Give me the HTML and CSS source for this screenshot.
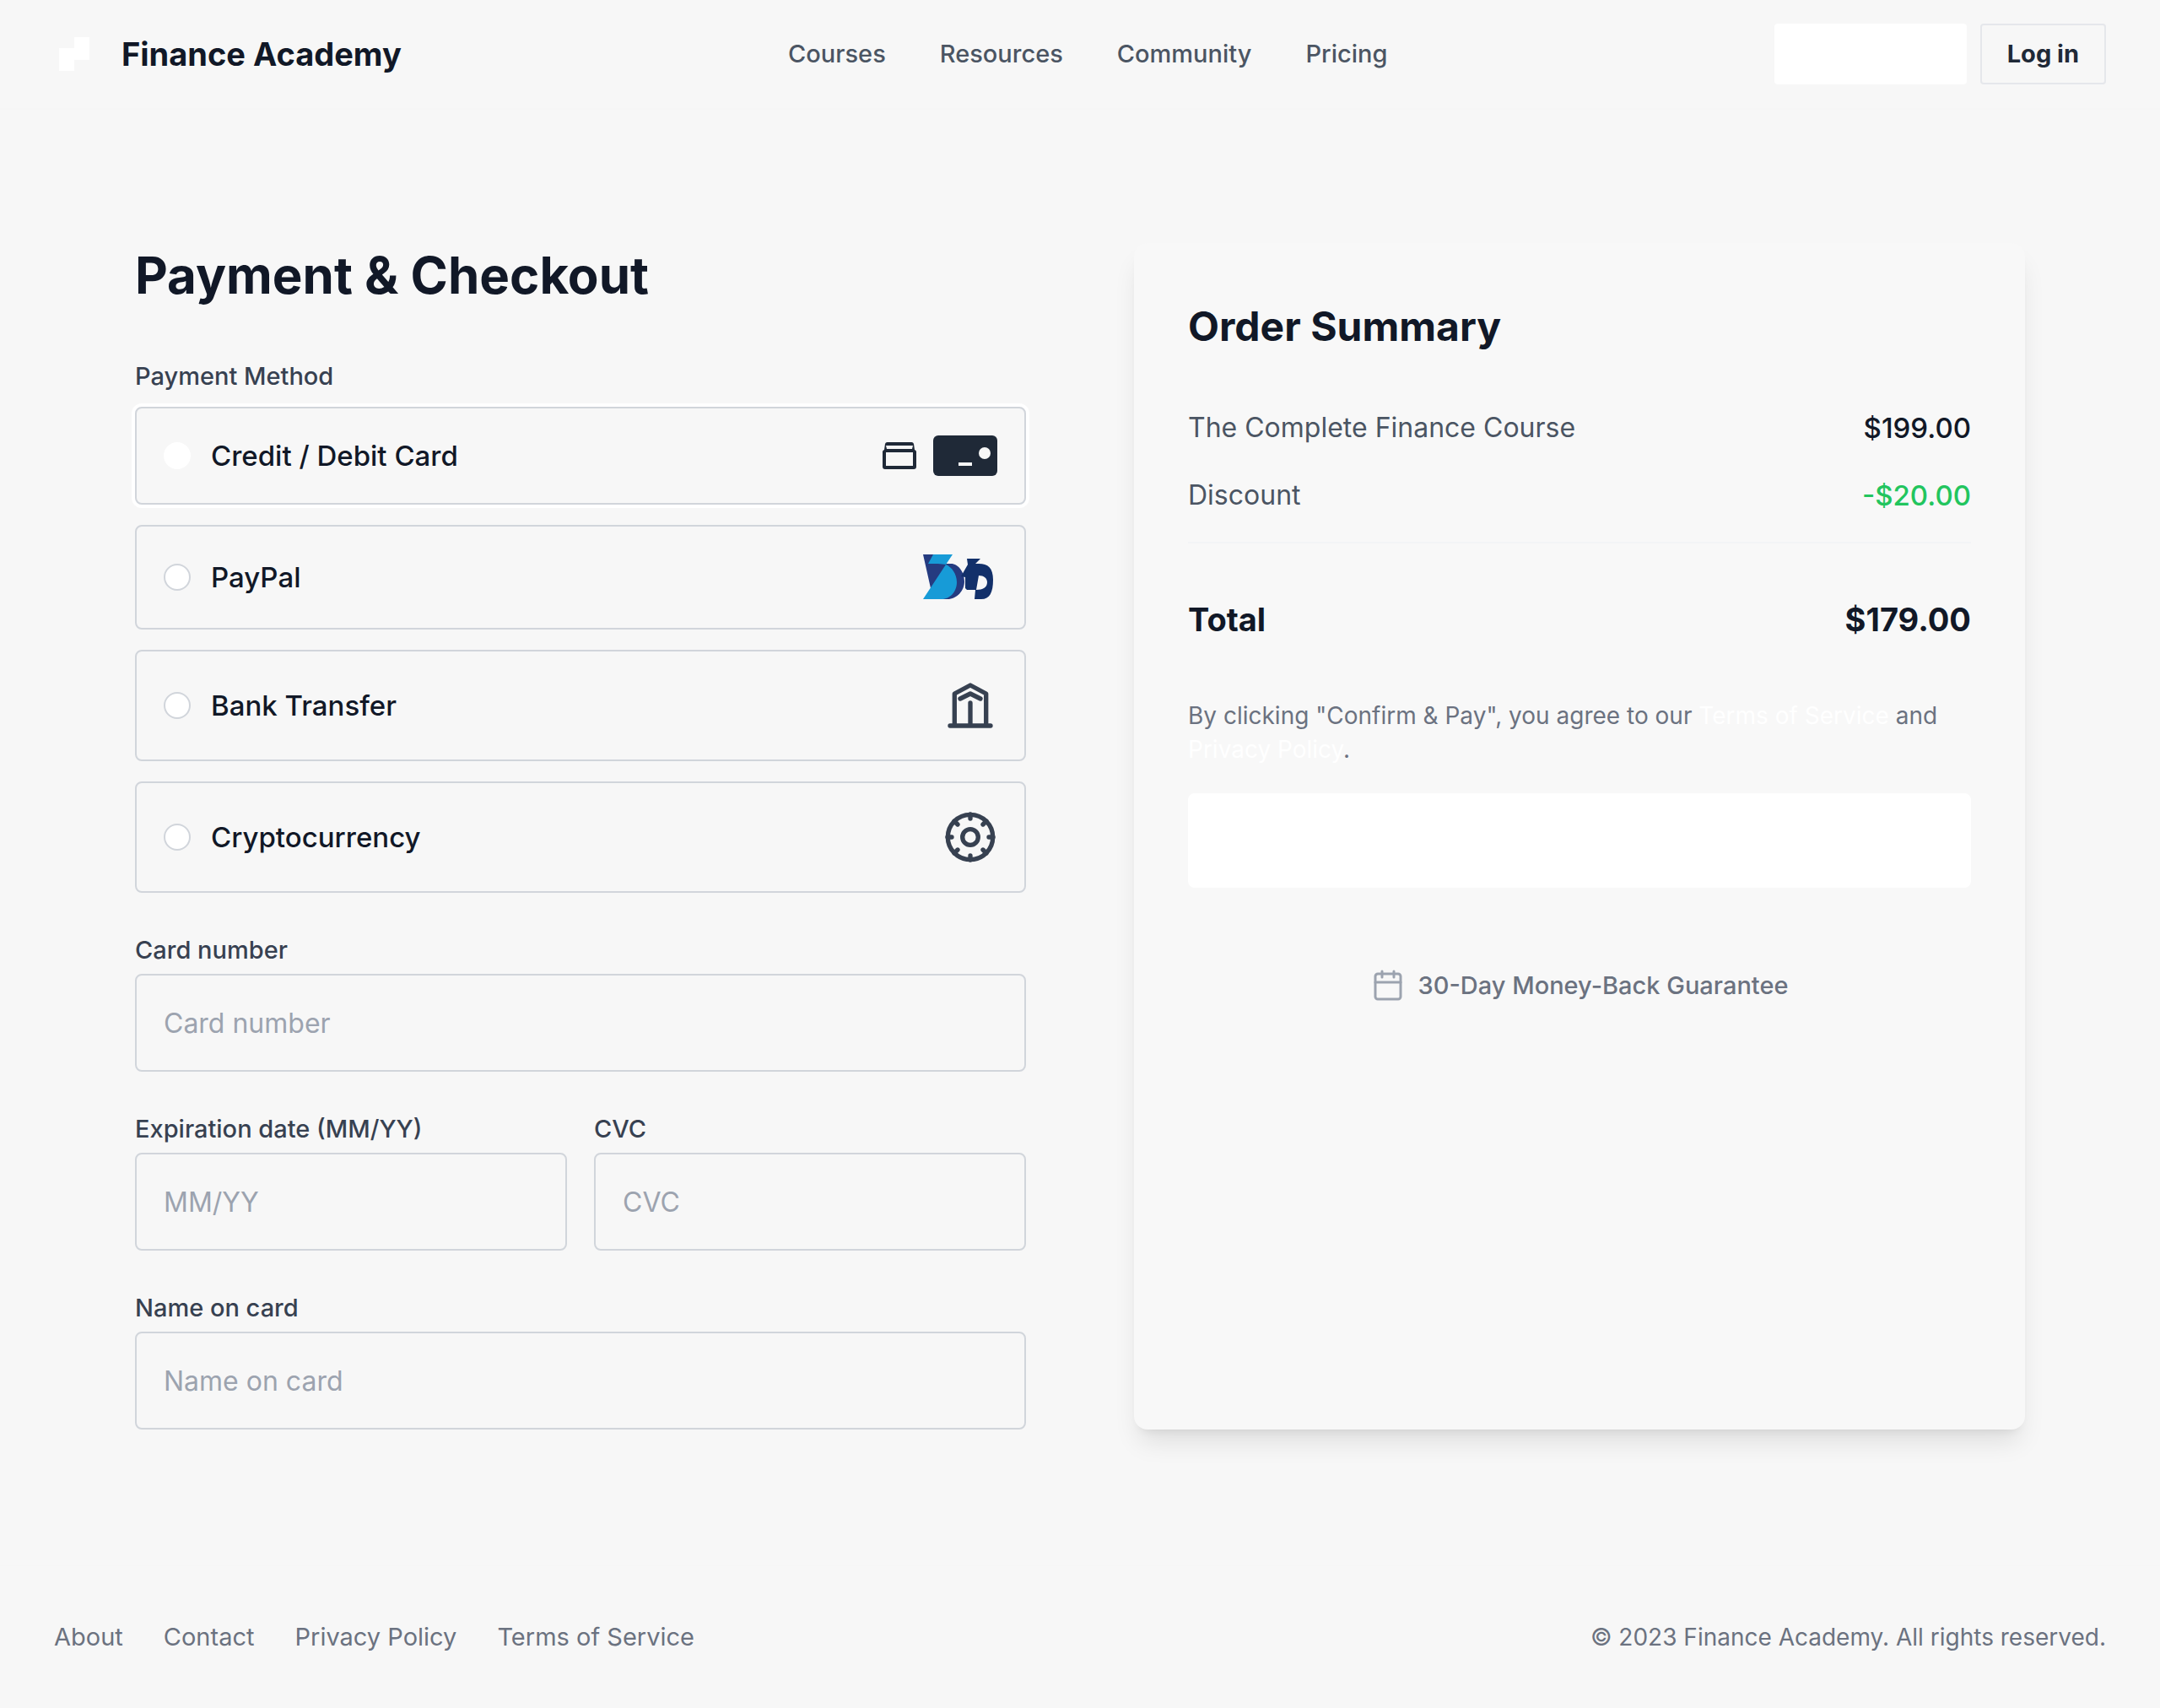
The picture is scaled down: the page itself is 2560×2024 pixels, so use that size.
FILE: index.html
```html
<!DOCTYPE html>
<html lang="en">
<head>
<meta charset="utf-8">
<meta name="viewport" content="width=device-width, initial-scale=1">
<title>Payment &amp; Checkout – Finance Academy</title>
<link rel="stylesheet" href="styles.css">
</head>
<body>
<header class="site-header">
  <a class="brand" href="#">
    <svg class="brand-mark" viewBox="0 0 48 48" aria-hidden="true"><path fill="#fff" d="M24 4h18v27H24v13H6V17h18z"/></svg>
    <span>Finance Academy</span>
  </a>
  <nav class="site-nav" aria-label="Main">
    <a href="#">Courses</a>
    <a href="#">Resources</a>
    <a href="#">Community</a>
    <a href="#">Pricing</a>
  </nav>
  <div class="header-actions">
    <button class="button button-primary" type="button" aria-label="Get started"></button>
    <button class="button button-outline" type="button">Log in</button>
  </div>
</header>

<main class="checkout">
  <form class="payment" id="payment">
    <h1>Payment &amp; Checkout</h1>
    <fieldset class="methods">
      <legend>Payment Method</legend>
      <label class="method">
        <input type="radio" name="method" value="card" checked>
        <span class="method-name">Credit / Debit Card</span>
        <svg class="icon-wallet" viewBox="0 0 40 32" aria-hidden="true"><path fill="#1f2937" fill-rule="evenodd" d="M6 0h28a3 3 0 0 1 3 2l1 7a3 3 0 0 1 2 2v18a3 3 0 0 1-3 3H3a3 3 0 0 1-3-3V11a3 3 0 0 1 2-2l1-7a3 3 0 0 1 3-2zM4 4l1 4h30l1-4zM4 12v16h32V12z"/></svg>
        <svg class="icon-card" viewBox="0 0 76 48" aria-hidden="true"><rect width="76" height="48" rx="6" fill="#1f2937"/><circle cx="61" cy="21" r="7" fill="#f7f7f7"/><path fill="#f7f7f7" d="M30 32h16v4H30z"/></svg>
      </label>
      <label class="method">
        <input type="radio" name="method" value="paypal">
        <span class="method-name">PayPal</span>
        <svg class="icon-paypal" viewBox="0 0 88 56" aria-hidden="true">
          <path fill="#253b80" d="M0 1h14l13 11h6c9 0 16 10 16 21S40 54 29 54H20L9 41z"/>
          <path fill="#179bd7" d="M12 1h23L27 13c7 3 13 11 13 21 0 11-8 20-18 20H0L27 13c-5-1-13-1-21-1z"/>
          <path fill="#12306a" fill-rule="evenodd" d="M52 6h16l-6 6h4c11 0 17 5 17 19 0 15-4 23-14 23h-8l1-11H52l-2-2V28l-5-1 8-14zM66 26l-3 17c8 0 13-3 13-9 0-5-4-8-10-8z"/>
        </svg>
      </label>
      <label class="method">
        <input type="radio" name="method" value="bank">
        <span class="method-name">Bank Transfer</span>
        <svg class="icon-line" viewBox="0 0 64 64" stroke-width="5.33" aria-hidden="true"><path d="M8 56h48M13.300 56V18L32 8l18.700 10v38M20 24l12-6 12 6M32 29v27"/></svg>
      </label>
      <label class="method">
        <input type="radio" name="method" value="crypto">
        <span class="method-name">Cryptocurrency</span>
        <svg class="icon-line" viewBox="0 0 64 64" stroke-width="5.33" aria-hidden="true"><circle cx="32" cy="32" r="26.700"/><circle cx="32" cy="32" r="9.300"/><path d="M32 5v5M32 54v5M5 32h5M54 32h5M13 13l4 4M47 47l4 4M51 13l-4 4M17 47l-4 4"/></svg>
      </label>
    </fieldset>
    <div class="field">
      <label for="number">Card number</label>
      <input id="number" type="text" placeholder="Card number">
    </div>
    <div class="field-row">
      <div class="field">
        <label for="expiry">Expiration date (MM/YY)</label>
        <input id="expiry" type="text" placeholder="MM/YY">
      </div>
      <div class="field">
        <label for="cvc">CVC</label>
        <input id="cvc" type="text" placeholder="CVC">
      </div>
    </div>
    <div class="field">
      <label for="name">Name on card</label>
      <input id="name" type="text" placeholder="Name on card">
    </div>
  </form>

  <section class="summary" aria-labelledby="summary-title">
    <h2 id="summary-title">Order Summary</h2>
    <dl class="lines">
      <div class="line"><dt>The Complete Finance Course</dt><dd>$199.00</dd></div>
      <div class="line"><dt>Discount</dt><dd class="saving">-$20.00</dd></div>
      <div class="line total"><dt>Total</dt><dd>$179.00</dd></div>
    </dl>
    <p class="terms">By clicking "Confirm &amp; Pay", you agree to our <a href="#">Terms of Service</a> and <a href="#">Privacy Policy</a>.</p>
    <button class="pay" type="submit" form="payment" aria-label="Confirm and pay"></button>
    <p class="guarantee">
      <svg class="icon-calendar" viewBox="0 0 40 40" aria-hidden="true"><rect x="5" y="6" width="30" height="30" rx="3"/><path d="M5 16h30M13 3v7M27 3v7"/></svg>
      <span>30-Day Money-Back Guarantee</span>
    </p>
  </section>
</main>

<footer class="site-footer">
  <nav class="footer-nav" aria-label="Footer">
    <a href="#">About</a>
    <a href="#">Contact</a>
    <a href="#">Privacy Policy</a>
    <a href="#">Terms of Service</a>
  </nav>
  <p>© 2023 Finance Academy. All rights reserved.</p>
</footer>
</body>
</html>
```
FILE: styles.css
```css
*, *::before, *::after { box-sizing: border-box; }
body {
  margin: 0;
  background: #f7f7f7;
  color: #111827;
  font: 400 28px/40px Inter, "Liberation Sans", sans-serif;
}
h1, h2, p, dl, dd { margin: 0; }
a { color: inherit; text-decoration: none; }
button, input { font: inherit; }

.site-header {
  display: flex;
  align-items: center;
  justify-content: space-between;
  height: 130px;
  border-bottom: 2px solid #f6f6f6;
  padding: 0 64px;
}
.brand { display: flex; align-items: center; gap: 32px; font-size: 38px; font-weight: 700; }
.brand-mark { width: 48px; height: 48px; }
.site-nav { display: flex; gap: 64px; color: #4b5563; font-size: 29px; font-weight: 500; }
.header-actions { display: flex; gap: 16px; }
.button { height: 72px; border: 2px solid #e5e7eb; border-radius: 4px; padding: 0 30px; font-size: 29px; font-weight: 700; }
.button-primary { width: 228px; border-color: #fff; background: #fff; }
.button-outline { background: transparent; color: #1f2937; }

.checkout {
  display: grid;
  grid-template-columns: 1fr 1fr;
  gap: 128px;
  padding: 158px 160px 160px;
}
.payment { display: flex; flex-direction: column; gap: 48px; }
h1 { margin-bottom: 14px; font-size: 60px; line-height: 76px; font-weight: 700; }
.methods { display: grid; gap: 24px; min-width: 0; margin: 0; border: 0; padding: 0; }
.methods legend { margin-bottom: 16px; padding: 0; color: #374151; font-size: 29px; font-weight: 500; }
.method {
  display: flex;
  align-items: center;
  gap: 20px;
  border: 2px solid #d1d5db;
  border-radius: 8px;
  padding: 32px;
  font-size: 33px;
  font-weight: 500;
}
.method:has(:checked) { box-shadow: 0 0 0 4px #fff; }
.method input {
  appearance: none;
  width: 32px;
  height: 32px;
  margin: 0 4px 0 0;
  border: 2px solid #d1d5db;
  border-radius: 50%;
  background: #fff;
}
.method input:checked { border-color: #fff; }
.method-name { flex: 1; }
.icon-wallet { width: 40px; height: 32px; }
.icon-card { width: 76px; height: 48px; }
.icon-paypal { width: 88px; height: 56px; }
.icon-line {
  width: 64px;
  height: 64px;
  fill: none;
  stroke: #374151;
  stroke-linecap: round;
  stroke-linejoin: round;
}

.field { display: flex; flex-direction: column; gap: 8px; min-width: 0; }
.field label { color: #374151; font-size: 29px; font-weight: 500; }
.field input {
  width: 100%;
  height: 116px;
  border: 2px solid #d1d5db;
  border-radius: 8px;
  padding: 0 32px;
  background: transparent;
  color: #111827;
  font-size: 32px;
}
.field input::placeholder { color: #9ca3af; opacity: 1; }
.field-row { display: grid; grid-template-columns: 1fr 1fr; gap: 32px; }

.summary {
  border-radius: 16px;
  padding: 64px;
  background: #f8f8f8;
  box-shadow: 0 20px 30px -6px rgb(0 0 0 / 10%), 0 8px 12px -8px rgb(0 0 0 / 10%);
}
h2 { font-size: 48px; line-height: 70px; font-weight: 700; }
.lines { padding-top: 60px; font-size: 32px; line-height: 50px; }
.line { display: flex; justify-content: space-between; margin-bottom: 30px; }
.line dt { color: #4b5563; }
.line dd { font-size: 33px; font-weight: 500; }
.line .saving { color: #22c55e; }
.total { margin: 0; border-top: 2px solid #f3f4f6; padding-top: 62px; line-height: 56px; }
.total dt, .total dd { color: #111827; font-size: 38px; font-weight: 700; }
.terms { padding: 66px 0 32px; color: #6b7280; }
.terms a { color: #fff; }
.pay { display: block; width: 100%; height: 112px; border: 0; border-radius: 8px; background: #fff; }
.guarantee {
  display: flex;
  align-items: center;
  justify-content: center;
  gap: 16px;
  padding-top: 96px;
  color: #6b7280;
  font-size: 29px;
  font-weight: 500;
}
.icon-calendar { width: 40px; height: 40px; fill: none; stroke: #9ca3af; stroke-width: 3; stroke-linecap: round; }

.site-footer {
  display: flex;
  align-items: center;
  justify-content: space-between;
  border-top: 2px solid #f6f6f6;
  padding: 64px;
  color: #6b7280;
}
.footer-nav { display: flex; gap: 48px; font-size: 29px; }
```
